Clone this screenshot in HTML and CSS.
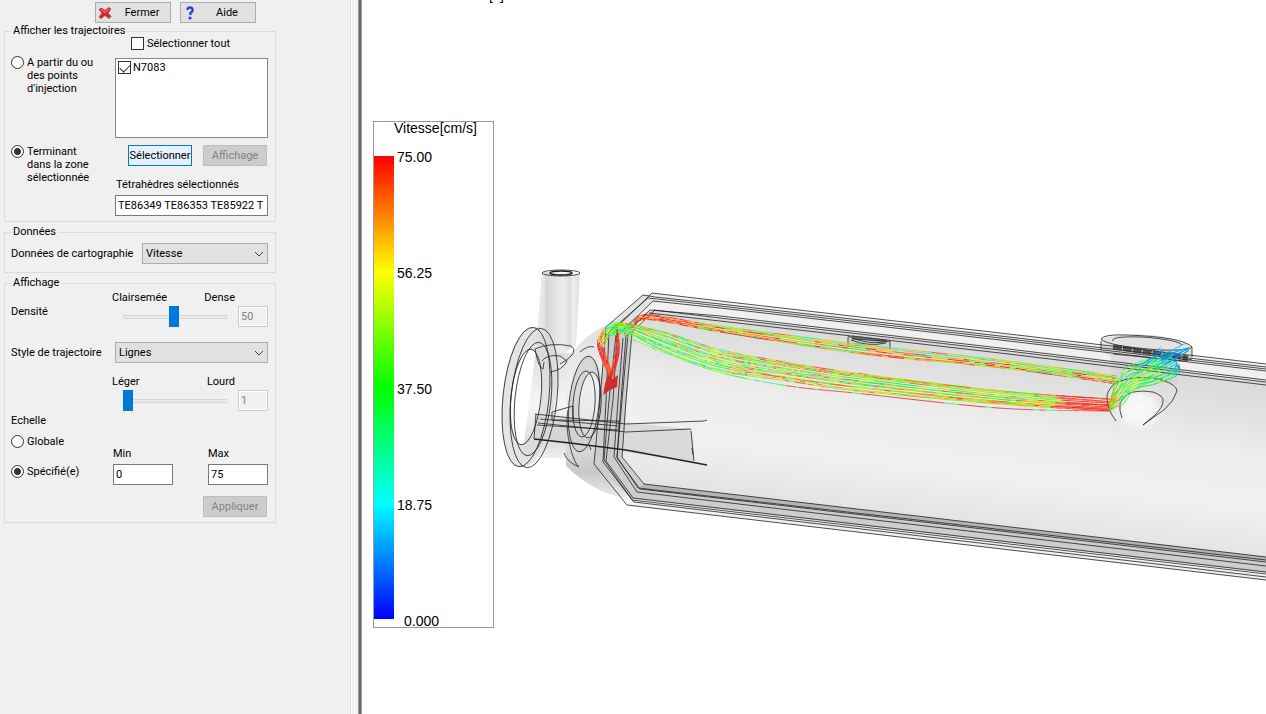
FILE: index.html
```html
<!DOCTYPE html>
<html lang="fr">
<head>
<meta charset="utf-8">
<title>Trajectoires</title>
<link rel="stylesheet" href="styles.css">
</head>
<body>
<main class="app">
<form class="panel">
  <div class="actions">
    <button type="button" class="btn btn-icon">
      <svg width="14" height="14" viewBox="0 0 14 14" aria-hidden="true"><path d="M1 3.500L3.500 2L7 4.500L10.500 1.500L13 3L10 7L13 10.500L11 12.500L7 9.500L3 12.500L1 11L4 7Z" fill="#d9242b" stroke="#b0585c" stroke-width="1"/><path d="M3 3.500L7 6.500L11 3" stroke="#f28a8a" fill="none"/></svg>
      <span>Fermer</span>
    </button>
    <button type="button" class="btn btn-icon">
      <svg width="14" height="14" viewBox="0 0 14 14" aria-hidden="true"><path d="M4.500 4Q4.500 1.500 7 1.500Q10 1.500 9.500 4.500Q9 6 7.500 7L7.200 9" fill="none" stroke="#2447d8" stroke-width="2.400"/><circle cx="7" cy="12" r="1.600" fill="#2447d8"/></svg>
      <span>Aide</span>
    </button>
  </div>

  <fieldset class="group">
    <legend>Afficher les trajectoires</legend>
    <label class="all"><input type="checkbox" class="tick"> Sélectionner tout</label>
    <div class="origin">
      <label class="choice"><input type="radio" name="origin" class="dot"> <span>A partir du ou<br>des points<br>d'injection</span></label>
      <div class="list"><label class="item"><input type="checkbox" class="tick" checked> N7083</label></div>
      <label class="choice"><input type="radio" name="origin" class="dot" checked> <span>Terminant<br>dans la zone<br>sélectionnée</span></label>
      <div class="zone">
        <div class="pair"><button type="button" class="btn btn-active">Sélectionner</button><button type="button" class="btn" disabled>Affichage</button></div>
        <label for="tetra">Tétrahèdres sélectionnés</label>
        <input type="text" id="tetra" class="field" value="TE86349 TE86353 TE85922 T">
      </div>
    </div>
  </fieldset>

  <fieldset class="group">
    <legend>Données</legend>
    <div class="row">
      <label for="data">Données de cartographie</label>
      <select id="data" class="combo combo-short"><option>Vitesse</option></select>
    </div>
  </fieldset>

  <fieldset class="group">
    <legend>Affichage</legend>
    <div class="slider">
      <label for="density">Densité</label>
      <div class="scale"><div class="ends"><span>Clairsemée</span><span>Dense</span></div><input type="range" id="density" class="range" value="50"></div>
      <input type="text" class="field" value="50" aria-label="Valeur de densité" disabled>
    </div>
    <div class="row style">
      <label for="style">Style de trajectoire</label>
      <select id="style" class="combo combo-long"><option>Lignes</option></select>
    </div>
    <div class="slider">
      <span></span>
      <div class="scale"><div class="ends"><span>Léger</span><span>Lourd</span></div><input type="range" class="range" min="1" value="1" aria-label="Épaisseur"></div>
      <input type="text" class="field" value="1" aria-label="Valeur d'épaisseur" disabled>
    </div>
    <div class="heading">Echelle</div>
    <div class="bounds">
      <div class="modes">
        <label class="choice"><input type="radio" name="scale" class="dot"> <span>Globale</span></label>
        <label class="choice"><input type="radio" name="scale" class="dot" checked> <span>Spécifié(e)</span></label>
      </div>
      <div class="bound"><label for="min">Min</label><input type="text" id="min" class="field" value="0"></div>
      <div class="bound"><label for="max">Max</label><input type="text" id="max" class="field" value="75"></div>
    </div>
    <div class="apply"><button type="button" class="btn" disabled>Appliquer</button></div>
  </fieldset>
</form>
<div class="splitter"></div>

<section class="view">
  <svg class="scene" viewBox="362 0 904 714" preserveAspectRatio="xMinYMin slice" role="img" aria-label="Modèle 3D">
    <defs>
      <linearGradient id="body" gradientUnits="userSpaceOnUse" x1="960" y1="345" x2="937" y2="530">
        <stop offset="0" stop-color="#dadada"/><stop offset=".2" stop-color="#e2e2e2"/><stop offset=".42" stop-color="#efefef"/><stop offset=".7" stop-color="#f0f0f0"/><stop offset="1" stop-color="#e0e0e0"/>
      </linearGradient>
      <linearGradient id="tube" x1="0" x2="1" y1="0" y2="0">
        <stop offset="0" stop-color="#ececec"/><stop offset=".2" stop-color="#e4e4e4"/><stop offset=".22" stop-color="#d6d6d6"/><stop offset=".6" stop-color="#ececec"/><stop offset=".8" stop-color="#dcdcdc"/><stop offset=".82" stop-color="#eee"/><stop offset="1" stop-color="#e0e0e0"/>
      </linearGradient>
      <linearGradient id="dome" x1="0" x2="0" y1="0" y2="1">
        <stop offset="0" stop-color="#dcdcdc"/><stop offset=".4" stop-color="#eee"/><stop offset=".65" stop-color="#e6e6e6"/><stop offset=".85" stop-color="#c8c8c8"/><stop offset="1" stop-color="#ededed"/>
      </linearGradient>
      <linearGradient id="neck" x1="0" x2="0" y1="0" y2="1">
        <stop offset="0" stop-color="#dcdcdc"/><stop offset=".5" stop-color="#f6f6f6"/><stop offset=".85" stop-color="#ddd"/><stop offset="1" stop-color="#f0f0f0"/>
      </linearGradient>
      <radialGradient id="glow"><stop offset="0" stop-color="#fafafa"/><stop offset=".6" stop-color="#f4f4f4"/><stop offset="1" stop-color="#f0f0f0" stop-opacity="0"/></radialGradient>
    </defs>
    <path fill="url(#neck)" d="M536 350L580 354L575 459L522 457Z"/>
    <path fill="url(#dome)" d="M566 370Q572 342 606 325L630 312V499Q596 495 566 466Z"/>
    <path fill="#f0f0f0" d="M643 295L652 293L720 302L1000 334L1266 365V382L1000 351L655 310L608 335Z"/>
    <path fill="url(#body)" d="M655 310L720 318L1000 350L1266 382V558L644 485L622 459L632 332Z"/>
    <path fill="#cdcdcd" d="M606 327L655 310L640 322L632 332L622 459L644 484L1266 557V573L632 499L594 464Z"/>
    <path fill="#f1f1f1" d="M632 500L1266 575V580L627 505Z"/>
    <path fill="#b5b5b5" d="M644 484L1266 557V561L638 488Z"/>
    <path fill="#e2e2e2" d="M643 295L655 299L615 335L602 332Z"/>
    <path fill="url(#tube)" d="M542 272L580 274L576 345Q555 362 536 347Z"/>
    <path fill="#cfcfcf" opacity=".65" d="M535 414L692 429L694 462L534 439Z"/>
    <path fill="#d8d8d8" opacity=".7" fill-rule="evenodd" d="M532 327Q545 324 554 345C563 385 551 435 534 462Q525 470 514 466C498 450 498 385 513 348Q521 329 532 327ZM530 349C510 358 505 430 520 445C538 440 544 405 541 370Q538 350 530 349Z"/>
    <path fill="#cfcfcf" opacity=".7" fill-rule="evenodd" d="M588 356C603 358 606 395 597 430Q590 455 577 452C564 440 566 365 588 356ZM592 372C578 376 573 422 586 437C598 440 607 385 592 372Z"/>
    <ellipse cx="1139" cy="410" rx="26" ry="24" fill="url(#glow)"/>
    <path fill="#d0d0d0" opacity=".6" d="M1101 340V351Q1110 356 1111 357V390Q1119 379 1140 377L1177 384V360L1192 357V346Q1165 332 1127 335Q1103 336 1101 340Z"/>
    <path fill="#ccc" opacity=".7" d="M848 336Q868 344 890 341V350Q868 352 848 345Z"/>
    <g class="wire wire-fine">
      <path d="M652 293L720 301L1000 333L1266 364M643 295L655 297L720 304L1000 336L1266 367M648 298L720 306L1000 338L1266 369M653 301L720 308L1000 340L1266 371"/>
      <path d="M650 310L720 316L1000 348L1266 380M654 310L720 318L1000 350L1266 382M649 313L720 321L1000 353L1266 385"/>
      <path d="M652 293L614 330M643 295L606 327M648 298L609 332M653 301L616 337M655 310L630 334M650 310L624 334M646 314L632 328"/>
      <path d="M606 327L600 400L594 464L627 505L1266 580M609 332L606 400L603 462L634 502L1266 577M616 335L609 400L604 460L632 500L1266 574M617 337L613 400L606 461L633 498L1266 572M623 338L618 400L614 457L637 492L1266 566M626 335L621 400L617 458L640 489L1266 562M628 334L622 400L617 457L638 488L1266 560M632 333L626 400L622 457L644 484L1266 557"/>
    </g>
    <g class="wire">
      <ellipse cx="561" cy="273" rx="19" ry="3"/><ellipse cx="561" cy="273" rx="11" ry="2" stroke-width="1.500"/>
      <ellipse cx="526" cy="397" rx="23" ry="70" transform="rotate(6 526 397)"/>
      <ellipse cx="534" cy="398" rx="23" ry="70" transform="rotate(6 534 398)"/>
      <ellipse cx="526" cy="397" rx="15" ry="48" transform="rotate(6 526 397)"/>
      <ellipse cx="533" cy="399" rx="18" ry="57" transform="rotate(6 533 399)"/>
      <path d="M535 349Q550 342 571 346Q576 349 572 355Q568 360 560 364M535 349Q538 367 543 369M544 362L543 369M542 361Q547 354 560 356L567 361Q563 370 550 372"/>
      <ellipse cx="584" cy="404" rx="15" ry="48" transform="rotate(6 584 404)"/>
      <ellipse cx="584" cy="404" rx="11" ry="33" transform="rotate(4 584 404)"/>
      <ellipse cx="590" cy="405" rx="11" ry="33" transform="rotate(4 590 405)"/>
      <path d="M564 453Q567 462 579 467M568 410C564 435 574 464 579 467M580 352Q588 345 594 347"/>
      <path d="M535 414L626 424L704 421L707 420M536 414L534 439M538 423L626 432L691 429M540 419L618 426M537 425L618 430M552 412L573 406V420M552 412V420L619 421V431M691 431L694 461M692 448L693 455M589 445L591 450"/>
      <path d="M534 439L570 443L626 450L707 465" stroke-width="1.500"/>
      <path d="M1101 339Q1104 334 1127 335Q1183 337 1192 347Q1190 351 1160 350Q1107 346 1101 339M1113 341Q1110 336 1143 337Q1178 340 1182 345M1101 341V350M1192 347V357M1113 354L1184 361L1192 359M1116 421Q1106 408 1107 395Q1110 386 1117 382Q1140 374 1162 380Q1177 385 1177 391Q1174 401 1165 409L1143 425M1122 418Q1119 411 1120 403Q1124 395 1133 392Q1143 390 1153 392Q1164 396 1163 401Q1163 407 1155 415L1143 425"/>
      <path d="M848 336Q868 346 890 341V350M848 337V346M851 340Q868 347 886 343M852 339L885 341"/>
    </g>
    <path d="M1113 347L1188 358" stroke="#292929" stroke-width="5" stroke-dasharray="9 1" opacity=".75"/><path d="M852 337L887 341" stroke="#333" stroke-width="3" opacity=".6"/>
    <g id="streams" fill="none"></g>
    <path fill="#d32c2c" d="M608 374L613 379L618 375L617 387L610 390L603 395L605 384Z"/>
  </svg>
  <span class="unit">[s]</span>
  <div class="key">
    <div class="key-title">Vitesse[cm/s]</div>
    <div class="key-body">
      <div class="key-bar"></div>
      <div class="key-values"><span>75.00</span><span>56.25</span><span>37.50</span><span>18.75</span><span class="zero">0.000</span></div>
    </div>
  </div>
</section>
</main>
<script src="streams.js"></script>
</body>
</html>
```
FILE: styles.css
```css
* { box-sizing: border-box; }
body { margin: 0; background: #fff; color: #000; font: 11px/13px Roboto, "Liberation Sans", sans-serif; }
.app { display: flex; height: 100vh; overflow: hidden; }
.panel { flex: 0 0 350px; padding: 2px 74px 0 4px; background: #f0f0f0; }
.splitter { flex: 0 0 12px; background: linear-gradient(90deg, #dcdcdc 0 1px, #fff 1px 2px, #f0f0f0 2px 4px, #fff 4px 5px, #f0f0f0 5px 8px, #a0a0a0 8px 9px, #696969 9px 11px, #a0a0a0 11px 12px); }
.actions { display: flex; justify-content: flex-end; gap: 9px; margin: 0 20px 2px 0; }
.btn { width: 64px; height: 21px; padding: 0; border: 1px solid #adadad; background: #e1e1e1; color: #000; font: inherit; white-space: nowrap; }
.btn:disabled { border-color: #bfbfbf; background: #ccc; color: #838383; }
.btn-active { border-color: #0078d7; background: #e5f1fb; }
.btn-icon { display: flex; align-items: center; width: 76px; padding: 0 2px; }
.btn-icon span { flex: 1; text-align: center; padding-left: 4px; }
.group { margin: 0 0 4px; padding: 0 7px 5px 6px; border: 1px solid #dcdcdc; min-width: 0; }
.group legend { padding: 0 2px; line-height: 12px; }
.tick, .dot { appearance: none; flex: none; width: 13px; height: 13px; margin: 0; border: 1px solid #333; background: #fff; }
.tick:checked { position: relative; }
.tick:checked::after { content: ""; position: absolute; left: 1px; top: 2px; width: 9px; height: 5px; border: solid #333; border-width: 0 0 1px 1px; transform: rotate(-45deg); }
.dot { border-radius: 50%; }
.dot:checked { background: radial-gradient(circle, #333 0 3px, #fff 4px); }
.all { display: flex; gap: 3px; margin-left: 120px; }
.origin { display: grid; grid-template-columns: 104px 1fr; row-gap: 7px; padding-top: 6px; }
.choice { display: flex; align-items: flex-start; gap: 3px; }
.list { height: 80px; margin-top: 2px; padding: 2px; border: 1px solid #828790; background: #fff; }
.item { display: flex; gap: 2px; }
.zone { display: flex; flex-direction: column; }
.zone label { margin: 12px 0 4px 1px; }
.pair { display: flex; justify-content: flex-end; gap: 11px; padding-right: 1px; }
.field { width: 100%; height: 21px; padding: 0 2px; border: 1px solid #7a7a7a; border-radius: 0; background: #fff; color: #000; font: inherit; }
.field:disabled { border-color: #ccc; background: #f0f0f0; color: #838383; box-shadow: inset 0 0 0 1px #fff; }
.row { display: flex; align-items: center; justify-content: space-between; padding: 5px 0 3px; }
.combo { appearance: none; height: 21px; padding: 0 3px; border: 1px solid #adadad; border-radius: 0; color: #000; font: inherit; background: #e1e1e1 url("data:image/svg+xml,%3Csvg xmlns='http://www.w3.org/2000/svg' width='10' height='6'%3E%3Cpath d='M1 1l4 4 4-4' fill='none' stroke='%23444'/%3E%3C/svg%3E") no-repeat right 3px center; }
.combo-short { width: 126px; }
.combo-long { width: 153px; }
.slider { display: grid; grid-template-columns: 101px 1fr 30px; align-items: end; padding-top: 2px; }
.slider > label { align-self: end; padding-bottom: 9px; }
.scale { display: flex; flex-direction: column; gap: 2px; }
.ends { display: flex; justify-content: space-between; padding-right: 3px; }
.range { appearance: none; width: 104px; height: 21px; margin: 0 0 0 11px; background: none; }
.range::-webkit-slider-runnable-track { height: 4px; border: 1px solid #d6d6d6; background: #e7eaea; }
.range::-webkit-slider-thumb { appearance: none; width: 10px; height: 21px; margin: -10px -1px 0; background: #0078d7; }
.row.style { padding: 15px 0 10px; }
.heading { margin-top: 3px; }
.bounds { display: grid; grid-template-columns: 67px 60px 60px; column-gap: 35px; padding-top: 8px; }
.modes { display: flex; flex-direction: column; gap: 17px; white-space: nowrap; width: 80px; }
.bound { display: flex; flex-direction: column; gap: 4px; padding-top: 12px; }
.apply { display: flex; justify-content: flex-end; padding: 11px 1px 0 0; }
.view { position: relative; flex: 1; min-width: 0; overflow: hidden; font: 14px/12px "Liberation Sans", Arial, sans-serif; }
.scene { display: block; width: 100%; height: 100%; }
.wire { fill: none; stroke: #222; stroke-width: 0.8; }
.wire-fine { stroke: #222; }
.unit { position: absolute; left: 127px; top: -11px; }
.key { position: absolute; left: 11px; top: 121px; display: flex; flex-direction: column; width: 121px; height: 507px; border: 1px solid #999; }
.key-title { padding-left: 20px; }
.key-body { display: flex; flex: 1; gap: 3px; padding-top: 17px; }
.key-bar { width: 20px; margin: 5px 0 8px; background: linear-gradient(#f00, #ff0 25%, #0f0 50%, #0ff 75%, #00f); }
.key-values { display: flex; flex-direction: column; justify-content: space-between; }
.zero { padding-left: 7px; }
```
FILE: streams.js
```js
const host = document.getElementById("streams");
let seed = 7;
const random = () => (seed = (seed * 16807) % 2147483647) / 2147483647;

// Catmull-Rom interpolation through the given stations.
function point(p, t) {
  const n = p.length - 1;
  const i = Math.min(n - 1, Math.floor(t * n));
  const u = t * n - i;
  const a = p[Math.max(0, i - 1)], b = p[i], c = p[i + 1], d = p[Math.min(n, i + 2)];
  return [0, 1].map(k => 0.5 * (2 * b[k] + (c[k] - a[k]) * u + (2 * a[k] - 5 * b[k] + 4 * c[k] - d[k]) * u * u + (3 * b[k] - a[k] - 3 * c[k] + d[k]) * u * u * u));
}

// Each station is [x, y of the first strand, y of the last strand, spread in x].
function bundle(stations, strands, steps, palette, width, jitter = 1) {
  for (let s = 0; s < strands; s++) {
    const f = strands > 1 ? s / (strands - 1) : 0;
    const pts = stations.map(q => [q[0] + (q[3] || 0) * f + (random() - 0.5) * jitter, q[1] + (q[2] - q[1]) * f + (random() - 0.5) * jitter]);
    let last = point(pts, 0);
    let color = "#0f0";
    for (let i = 1; i <= steps; i++) {
      const next = point(pts, i / steps);
      const set = palette(i / steps, f);
      if (random() < 0.6) color = set[Math.floor(random() * set.length)];
      const line = document.createElementNS("http://www.w3.org/2000/svg", "path");
      line.setAttribute("d", `M${last[0]} ${last[1]}L${next[0]} ${next[1]}`);
      line.setAttribute("stroke", color);
      line.setAttribute("stroke-width", width);
      host.append(line);
      last = next;
    }
  }
}

const green = ["#2f2", "#1e3", "#7f1", "#bf0", "#5f3", "#4db"];
const mixed = ["#4e2", "#ae0", "#fb0", "#f60", "#e90", "#8e3", "#bd2"];
const red = ["#e22", "#f31", "#d33", "#f63"];
const cool = ["#0d9", "#0ec", "#2e6", "#0be"];
const blue = ["#17e", "#09f", "#0ce"];

bundle([[634, 322, 326], [649, 315, 320], [720, 326, 332], [860, 344, 354], [1000, 360, 368], [1117, 376, 384]], 6, 130,
  (t, f) => t < 0.35 ? [...red, "#fa3"] : f < 0.4 ? [...mixed, "#5db", "#4e8"] : [...red, ...mixed], 1);
bundle([[612, 326, 336], [627, 323, 333], [665, 332, 352], [720, 350, 371], [790, 363, 382], [860, 373, 391], [1000, 390, 405], [1110, 399, 411]], 13, 160,
  (t, f) => t > 0.92 ? red : t < 0.45 ? (f > 0.5 ? green : [...green, ...mixed]) : (f < 0.2 || f > 0.7 ? [...mixed, "#e42"] : [...mixed, ...green, "#f53"]), 0.9, 2);
bundle([[625, 336, 336], [665, 353, 353], [720, 373, 373], [790, 386, 386], [860, 394, 394], [1000, 408, 408], [1110, 411, 411]], 1, 130,
  t => t < 0.5 ? green : [...red, "#4e4"], 0.8);
bundle([[630, 326, 332], [612, 323, 335], [598, 338, 346, 6], [600, 354, 356, 6], [610, 376, 378, 3]], 6, 30,
  t => t > 0.55 ? red : t > 0.35 ? [...mixed, "#e43"] : green, 1.1);
bundle([[617, 329, 332], [617, 342, 342, 2], [615, 356, 356, 3], [610, 377, 377, 3]], 4, 20, () => red, 1.2);
bundle([[1110, 399, 411], [1117, 383, 402, 5], [1128, 369, 391, 8], [1148, 360, 383, 10], [1164, 354, 376, 12], [1174, 351, 368, 6]], 19, 36,
  (t, f) => t < 0.18 ? [...mixed, "#3e3"] : t < 0.7 ? [...green, "#0e8"] : t < 0.9 ? cool : blue, 0.9, 4);
bundle([[1148, 361, 372, 8], [1162, 354, 363, 7], [1187, 345, 352, 2]], 7, 14, t => t < 0.4 ? cool : blue, 0.9, 4);
bundle([[1136, 365, 370], [1150, 358, 363], [1158, 350, 352], [1163, 347, 350]], 3, 12, () => blue, 0.8, 4);
```
